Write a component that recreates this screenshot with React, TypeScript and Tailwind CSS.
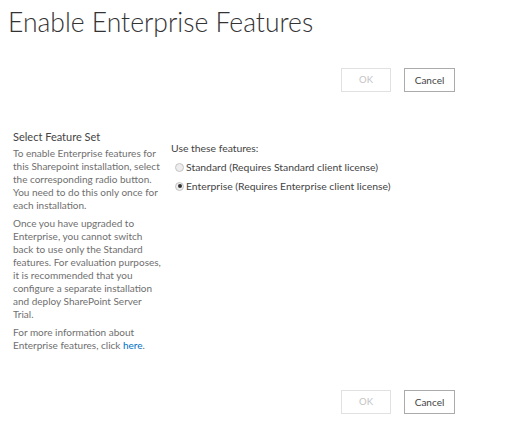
import React from "react";

function Buttons() {
  return (
    <div className="flex justify-end gap-[13px] pr-[65px]">
      <button
        disabled
        className="h-[24px] w-[50px] border border-[#e1e1e1] bg-white text-[9.5px] text-[#c4c4c4]"
      >
        OK
      </button>
      <button className="h-[24px] w-[51px] border border-[#ababab] bg-white text-[10px] text-[#444]">
        Cancel
      </button>
    </div>
  );
}

function Radio({ checked, label }: { checked?: boolean; label: string }) {
  return (
    <label className="flex items-center gap-[2px]">
      <span className="flex h-[9px] w-[9px] items-center justify-center rounded-full border border-[#c4c4c4] bg-[#ededed]">
        {checked && <span className="h-[4px] w-[4px] rounded-full bg-[#333]" />}
      </span>
      <span>{label}</span>
    </label>
  );
}

export default function App() {
  return (
    <div
      className="h-[436px] w-[520px] overflow-hidden bg-white text-[#444]"
      style={{ fontFamily: 'Lato, "Open Sans", sans-serif' }}
    >
      <h1 className="pl-[8px] pt-[4px] text-[26.5px] font-light leading-[36px] text-[#333]">
        Enable Enterprise Features
      </h1>
      <div className="mt-[28px]">
        <Buttons />
      </div>
      <div className="mt-[38px] flex">
        <div className="w-[158px] whitespace-nowrap pl-[13px]">
          <div className="text-[11px] leading-[14px] text-[#444]">Select Feature Set</div>
          <div className="mt-[3px] space-y-[5px] text-[10px] leading-[13px] text-[#6f6f6f]">
            <p>
              To enable Enterprise features for
              <br />
              this Sharepoint installation, select
              <br />
              the corresponding radio button.
              <br />
              You need to do this only once for
              <br />
              each installation.
            </p>
            <p>
              Once you have upgraded to
              <br />
              Enterprise, you cannot switch
              <br />
              back to use only the Standard
              <br />
              features. For evaluation purposes,
              <br />
              it is recommended that you
              <br />
              configure a separate installation
              <br />
              and deploy SharePoint Server
              <br />
              Trial.
            </p>
            <p>
              For more information about
              <br />
              Enterprise features, click <a className="text-[#0072c6]">here</a>.
            </p>
          </div>
        </div>
        <div className="pl-[13px] pt-[11px] text-[10.4px] leading-[14px] text-[#444]">
          <div>Use these features:</div>
          <div className="mt-[5px] space-y-[5px] pl-[4px]">
            <Radio label="Standard (Requires Standard client license)" />
            <Radio checked label="Enterprise (Requires Enterprise client license)" />
          </div>
        </div>
      </div>
      <div className="mt-[38px]">
        <Buttons />
      </div>
    </div>
  );
}
